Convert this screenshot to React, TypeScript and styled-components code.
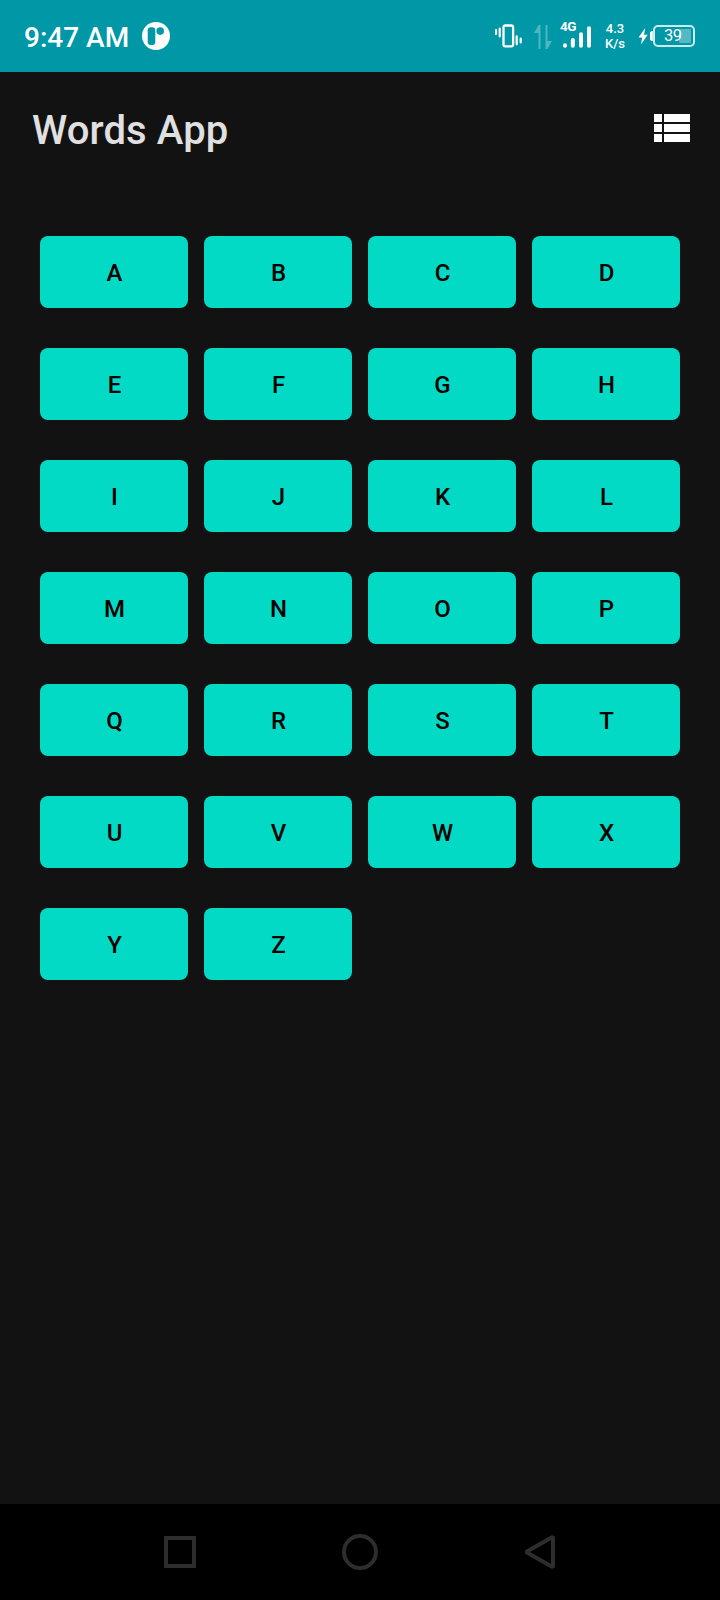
import React from 'react';
import styled, { createGlobalStyle } from 'styled-components';

const GlobalStyle = createGlobalStyle`
  * { box-sizing: border-box; }
  html, body { margin: 0; background: #121212; }
  body { font-family: Roboto, "Liberation Sans", sans-serif; font-weight: 500; }
`;

const Screen = styled.div`
  width: 720px;
  height: 1600px;
  display: flex;
  flex-direction: column;
  background: #121212;
  overflow: hidden;
`;

const StatusBar = styled.header`
  flex: none;
  height: 72px;
  padding: 0 25px 0 24px;
  display: flex;
  align-items: center;
  background: #0097a7;
  color: #fff;
`;

const Clock = styled.span`
  width: 118px;
  padding-top: 3px;
  font-size: 28px;
  line-height: 36px;
  white-space: nowrap;
`;

const StatusIcons = styled.div`
  margin-left: auto;
  display: flex;
  align-items: center;
`;

const StatusIcon = styled.svg<{ $gap?: number }>`
  display: block;
  flex: none;
  margin-left: ${({ $gap = 0 }) => $gap}px;
`;

const Signal = styled.div`
  width: 32px;
  height: 28px;
  margin: -3px 0 0 8px;
  display: flex;
  flex-direction: column;
`;

const NetworkType = styled.span`
  height: 4px;
  font-size: 13.5px;
  line-height: 11px;
  font-weight: 700;
  letter-spacing: -0.5px;
`;

const Speed = styled.div`
  width: 26px;
  margin-left: 10px;
  font-size: 13px;
  line-height: 15px;
  text-align: center;
`;

const Battery = styled.div`
  width: 42px;
  height: 22px;
  padding: 2px;
  border: 2px solid #cbebee;
  border-radius: 5px;
  display: flex;
  justify-content: flex-end;
  position: relative;
`;

const BatteryFill = styled.div`
  width: 12px;
  height: 14px;
  border-radius: 1px;
  background: rgba(255, 255, 255, 0.33);
`;

const BatteryLevel = styled.span`
  position: absolute;
  left: 9px;
  top: 0;
  font-size: 16.5px;
  line-height: 18px;
  font-weight: 400;
  letter-spacing: -0.4px;
`;

const AppBar = styled.div`
  flex: none;
  height: 112px;
  padding: 0 30px 0 32px;
  display: flex;
  align-items: center;
  justify-content: space-between;
`;

const Title = styled.h1`
  margin: 6px 0 0;
  font-size: 40px;
  line-height: 48px;
  font-weight: 500;
  letter-spacing: 0.12px;
  color: #e0e0e0;
`;

const ListToggle = styled.button`
  padding: 0;
  border: 0;
  background: none;
  display: block;
`;

const Letters = styled.main`
  flex: 1;
  padding: 52px 40px 0;
  display: grid;
  grid-template-columns: repeat(4, 148px);
  grid-auto-rows: 72px;
  gap: 40px 16px;
  align-content: start;
`;

const LetterButton = styled.button`
  padding: 2px 0 0 1px;
  border: 0;
  border-radius: 8px;
  background: #03dac5;
  color: #000;
  font: 500 24px/28px Roboto, "Liberation Sans", sans-serif;
`;

const NavBar = styled.nav`
  flex: none;
  height: 96px;
  padding: 0 162px;
  display: flex;
  align-items: center;
  justify-content: space-between;
  background: #000;
`;

const letters = 'ABCDEFGHIJKLMNOPQRSTUVWXYZ'.split('');

export default function App() {
  return (
    <Screen>
      <GlobalStyle />
      <StatusBar>
        <Clock>9:47 AM</Clock>
        <StatusIcon width="28" height="28" viewBox="0 0 28 28">
          <circle cx="14" cy="14" r="14" fill="#fff" />
          <rect x="5.700" y="5.300" width="7.600" height="17.700" rx="3" fill="#0097a7" />
          <circle cx="18.200" cy="9.100" r="3.800" fill="#0097a7" />
        </StatusIcon>
        <StatusIcons>
          <StatusIcon width="28" height="24" viewBox="0 0 28 24" fill="none" stroke="#fff">
            <rect x="8.500" y="1.500" width="9.600" height="20.800" rx="1.800" strokeWidth="2.300" />
            <path d="M1 6v4M4.700 4.500v8M21.700 12.300v8M25.700 14.500v4" strokeWidth="2.200" strokeLinecap="round" />
          </StatusIcon>
          <StatusIcon $gap={11} width="18" height="25" viewBox="0 0 18 25" fill="#fff" opacity="0.3">
            <path d="M4.500 1H6.500V25H4.500V9H0z" />
            <path d="M11.500 1h2v16H18l-4.500 8h-2z" />
          </StatusIcon>
          <Signal>
            <NetworkType>4G</NetworkType>
            <StatusIcon $gap={3} width="29" height="23" viewBox="0 0 29 23" stroke="#fff" strokeWidth="4" strokeLinecap="round">
              <path d="M2 20.300v.4M9.800 15v5.700M18 9.300v11.400M26 3.300v17.400" />
            </StatusIcon>
          </Signal>
          <Speed>4.3<br />K/s</Speed>
          <StatusIcon $gap={10} width="15" height="18" viewBox="0 0 15 18" fill="#fff">
            <path d="M7.200 1L.500 10.500h3.700L3 17.500 9.700 7.800H6z" />
            <path d="M14.800 4q-2.800 0-2.800 2v6q0 2 2.800 2z" />
          </StatusIcon>
          <Battery>
            <BatteryFill />
            <BatteryLevel>39</BatteryLevel>
          </Battery>
        </StatusIcons>
      </StatusBar>
      <AppBar>
        <Title>Words App</Title>
        <ListToggle aria-label="Switch to list">
          <svg width="36" height="28" viewBox="0 0 36 28" fill="#fff" display="block">
            <path d="M0 0h8v8H0zM10 0h26v8H10zM0 10h8v8H0zM10 10h26v8H10zM0 20h8v8H0zM10 20h26v8H10z" />
          </svg>
        </ListToggle>
      </AppBar>
      <Letters>
        {letters.map((letter) => (
          <LetterButton key={letter}>{letter}</LetterButton>
        ))}
      </Letters>
      <NavBar>
        <svg width="36" height="36" viewBox="0 0 36 36" fill="none" stroke="#2d2d2d" strokeWidth="4">
          <rect x="4" y="4" width="28" height="28" />
        </svg>
        <svg width="36" height="36" viewBox="0 0 36 36" fill="none" stroke="#2d2d2d" strokeWidth="4">
          <circle cx="18" cy="18" r="16" />
        </svg>
        <svg width="36" height="36" viewBox="0 0 36 36" fill="none" stroke="#2d2d2d" strokeWidth="4" strokeLinejoin="bevel">
          <path d="M31 2.800v30.400L4 18z" />
        </svg>
      </NavBar>
    </Screen>
  );
}
